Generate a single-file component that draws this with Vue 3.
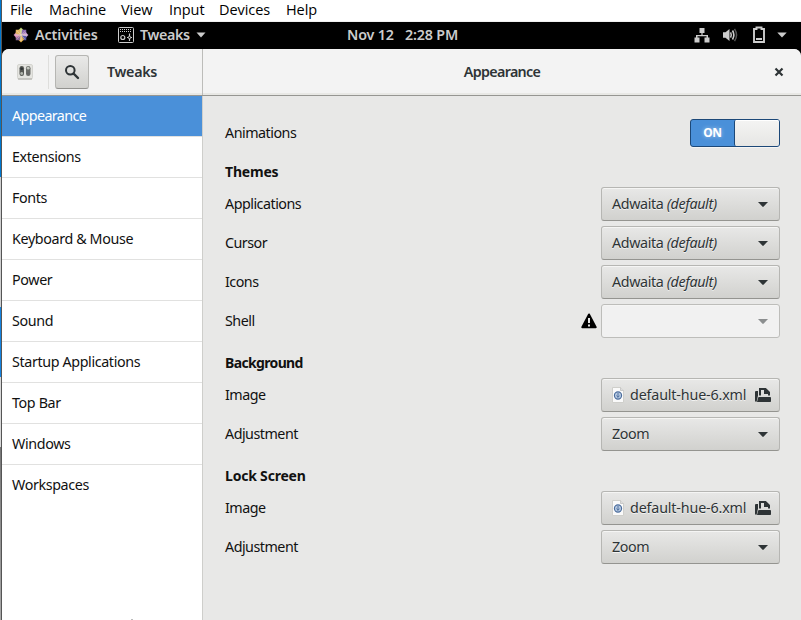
<script setup>
const menus = [
  { t: 'File', w: 39 }, { t: 'Machine', w: 72 }, { t: 'View', w: 48 },
  { t: 'Input', w: 50 }, { t: 'Devices', w: 67 }, { t: 'Help', w: 50 },
]
const pages = ['Appearance', 'Extensions', 'Fonts', 'Keyboard & Mouse', 'Power', 'Sound', 'Startup Applications', 'Top Bar', 'Windows', 'Workspaces']
const groups = [
  { title: 'Themes', rows: [
    { label: 'Applications', kind: 'combo', value: 'Adwaita', note: '(default)' },
    { label: 'Cursor', kind: 'combo', value: 'Adwaita', note: '(default)' },
    { label: 'Icons', kind: 'combo', value: 'Adwaita', note: '(default)' },
    { label: 'Shell', kind: 'combo', value: '', disabled: true },
  ] },
  { title: 'Background', tight: true, rows: [
    { label: 'Image', kind: 'file', value: 'default-hue-6.xml' },
    { label: 'Adjustment', kind: 'combo', value: 'Zoom' },
  ] },
  { title: 'Lock Screen', rows: [
    { label: 'Image', kind: 'file', value: 'default-hue-6.xml' },
    { label: 'Adjustment', kind: 'combo', value: 'Zoom' },
  ] },
]
const petals = [0, 45, 90, 135, 180, 225, 270, 315]
const petalColors = ['#b9cf6b', '#8d6bb0', '#c59ad0', '#5b5aa8', '#e8b24c', '#8f6a9a', '#d58ab8', '#e5b767']
</script>

<template>
  <div class="screen">
    <div class="edge">
      <i class="e1"></i><i class="e2"></i><i class="e3"></i><i class="e4"></i><i class="e5"></i>
    </div>
    <div class="main">
      <nav class="menubar">
        <span v-for="m in menus" :key="m.t" :style="{ width: m.w + 'px' }">{{ m.t }}</span>
      </nav>
      <div class="topbar">
        <div class="tb-left">
          <svg class="centos" width="16" height="16" viewBox="0 0 16 16">
            <path v-for="(a, i) in petals" :key="a" :transform="`rotate(${a} 8 8)`" d="M8 8L5 3.4L8 .6L11 3.4Z" :fill="petalColors[i]" />
            <path d="M8 2V14M2 8H14" stroke="#f1e6d2" stroke-width=".8" />
            <path d="M4.2 4.2L11.8 11.8M11.8 4.2L4.2 11.8" stroke="#f1e6d2" stroke-width=".4" />
          </svg>
          <b class="activities">Activities</b>
          <svg class="app-icon" width="16" height="16" viewBox="0 0 16 16" fill="none" stroke="#ccc">
            <rect x=".5" y=".5" width="15" height="15" rx="1" />
            <path d="M2 2.5H14M2 4.5H14" stroke-dasharray="1 1" />
            <circle cx="4.8" cy="10.5" r="2" stroke-width="1.2" />
            <path d="M11.5 6.5V14M9 10.5H14" stroke-width="1.2" /><circle cx="11.5" cy="10.5" r="1.2" fill="#000" />
          </svg>
          <b class="appname">Tweaks</b>
          <svg width="10" height="6" viewBox="0 0 10 6"><path d="M.5 .5H9.5L5 5.5Z" fill="#ccc" /></svg>
        </div>
        <b class="clock"><span>Nov 12</span><span>2:28 PM</span></b>
        <div class="tb-right">
          <svg width="16" height="16" viewBox="0 0 16 16" fill="#ccc">
            <path d="M5.5 1H10.5V6H8.6V8H14V10.5H15.5V15.5H10.5V10.5H12.5V9.3H3.5V10.5H5.5V15.5H.5V10.5H2V8H7.4V6H5.5Z" />
          </svg>
          <svg width="16" height="16" viewBox="0 0 16 16" fill="none" stroke="#ccc">
            <path d="M1 5.2H3.5L7.5 2V14L3.5 10.8H1Z" fill="#ccc" stroke="none" />
            <path d="M8.6 5.3Q10 8 8.6 10.7" stroke-width="1.5" />
            <path d="M10.5 3.5Q13.2 8 10.5 12.5" stroke-width="1.6" />
            <path d="M12.5 1.8Q16.6 8 12.5 14.2" stroke="#555" stroke-width="1.5" />
          </svg>
          <svg width="14" height="18" viewBox="0 0 14 18">
            <path d="M4.5 3V1.5H9.5V3H12V16H2V3Z" fill="none" stroke="#ccc" stroke-width="1.9" />
            <path d="M4 13H10" stroke="#ccc" stroke-width="2" />
          </svg>
          <svg width="10" height="6" viewBox="0 0 10 6"><path d="M.3 .5H9.7L5 5.5Z" fill="#ccc" /></svg>
        </div>
      </div>
      <div class="window">
        <header class="header">
          <div class="head-left">
            <svg class="tweaks-icon" width="16" height="16" viewBox="0 0 16 16">
              <rect x=".5" y=".5" width="15" height="14.5" rx="1.5" fill="#e4e4e0" stroke="#d4d4d0" />
              <path d="M1 15H15" stroke="#aaaaa5" />
              <rect x="2.5" y="2" width="4.5" height="10" rx="2.2" fill="#555753" />
              <rect x="9" y="2" width="4.5" height="10" rx="2.2" fill="#6a6c68" />
              <circle cx="4.7" cy="4.8" r="1.3" fill="#2e3436" /><circle cx="4.7" cy="9.5" r="1.4" fill="#b3b7af" />
              <circle cx="11.2" cy="4.2" r="1.4" fill="#c3c7bf" /><circle cx="11.2" cy="9.5" r="1.2" fill="#666" />
            </svg>
            <i class="sep"></i>
            <button class="search">
              <svg width="16" height="16" viewBox="0 0 16 16" fill="none" stroke="#2e3436">
                <circle cx="6.3" cy="6.3" r="4.3" stroke-width="2" /><path d="M9.5 9.5L14 14" stroke-width="2.4" stroke-linecap="round" />
              </svg>
            </button>
            <b class="title">Tweaks</b>
          </div>
          <div class="head-right">
            <b class="title">Appearance</b>
            <svg class="close" width="10" height="10" viewBox="0 0 10 10"><path d="M1.5 1.5L8.5 8.5M8.5 1.5L1.5 8.5" stroke="#2e3436" stroke-width="2.2" /></svg>
          </div>
        </header>
        <div class="body">
          <aside class="sidebar">
            <div v-for="(p, i) in pages" :key="p" class="page" :class="{ active: i === 0, last: i === pages.length - 1 }">{{ p }}</div>
            <i class="speck"></i>
          </aside>
          <main class="content">
            <div class="row anim">
              <span class="label">Animations</span>
              <div class="switch"><span class="on">ON</span><i class="knob"></i></div>
            </div>
            <section v-for="g in groups" :key="g.title">
              <h2 :class="{ tight: g.tight }">{{ g.title }}</h2>
              <div class="rows">
                <div v-for="r in g.rows" :key="r.label" class="row">
                  <span class="label">{{ r.label }}</span>
                  <svg v-if="r.disabled" class="warn" width="16" height="16" viewBox="0 0 16 16">
                    <path d="M8 1.5L14.7 14.2H1.3Z" stroke="#000" stroke-width="2" stroke-linejoin="round" /><path d="M8 5V10M8 11.5V13.5" stroke="#e8e8e7" stroke-width="2" />
                  </svg>
                  <div class="button" :class="{ disabled: r.disabled }">
                    <svg v-if="r.kind === 'file'" class="doc" width="12" height="16" viewBox="0 0 12 16">
                      <path d="M.5 .5H8.5L11.5 3.5V15.5H.5Z" fill="#fafafa" stroke="#cfcfcb" /><path d="M8.5 .5V3.5H11.5" fill="#ddd" stroke="#bbb" stroke-width=".7" />
                      <circle cx="6" cy="8.5" r="3.6" fill="#b5c8e0" stroke="#4a6c9c" stroke-width="1.1" />
                      <path d="M6 6V10.5M4.4 8.6L6 10.2L7.6 8.6" fill="none" stroke="#4a6c9c" stroke-width=".9" />
                    </svg>
                    <span class="value" :class="{ file: r.kind === 'file' }">{{ r.value }}<em v-if="r.note">&nbsp;{{ r.note }}</em></span>
                    <svg v-if="r.kind === 'file'" class="folder" width="16" height="16" viewBox="0 0 16 16">
                      <path d="M0 5Q0 4 1 4H3V8.5L1.6 14.8H1Q0 14.8 0 14Z" fill="#2e3436" />
                      <path d="M5 8.5V2H10.5L14 5.5V8.5" fill="none" stroke="#2e3436" stroke-width="2" /><path d="M9 2V7H14.5V5.5L11 2Z" fill="#2e3436" />
                      <path d="M4 10H15.2Q16 10 16 10.8V14.2Q16 15 15.2 15H2L3.1 10.7Q3.3 10 4 10Z" fill="#2e3436" />
                    </svg>
                    <svg v-else class="arrow" width="10" height="5" viewBox="0 0 10 5"><path d="M0 0H10L5.7 4.6Q5 5.2 4.3 4.6Z" fill="currentColor" /></svg>
                  </div>
                </div>
              </div>
            </section>
          </main>
        </div>
      </div>
    </div>
  </div>
</template>

<style>
body { margin: 0; overflow: hidden; background: #fff; }
</style>
<style scoped>
* { box-sizing: border-box; }
.screen { width: 801px; height: 620px; display: flex; font: 14.3px/20px "Noto Sans", sans-serif; letter-spacing: -.37px; color: #111; overflow: hidden; white-space: nowrap; }
.edge { width: 2px; flex: none; display: flex; flex-direction: column; border-right: 1px solid #555; }
.edge i { display: block; flex: none; }
.e1 { height: 177px; background: #0078d0; }
.e2 { height: 130px; background: #cfcfcf; }
.e3 { height: 70px; background: #1683df; }
.e4 { height: 70px; background: #d8d8d8; }
.e5 { height: 173px; background: linear-gradient(#777, #aaa); }
.main { flex: 1; min-width: 0; display: flex; flex-direction: column; background: #000; }
.menubar { height: 22px; background: #fff; border-bottom: 1px solid #f0f0f0; display: flex; padding-left: 8px; line-height: 19px; font-family: "Open Sans", "Noto Sans", sans-serif; font-size: 14.5px; letter-spacing: -.07px; color: #000; }
.topbar { height: 27px; flex: none; display: grid; grid-template-columns: 345px 1fr auto; align-items: center; color: #ccc; font-weight: 600; padding-bottom: 1px; }
.topbar b { font-weight: 600; }
.tb-left { display: flex; align-items: center; padding-left: 11px; }
.activities { margin-left: 6px; width: 83px; letter-spacing: -.1px; }
.appname { margin-left: 6px; width: 56px; }
.clock { display: flex; gap: 11px; letter-spacing: -.15px; }
.tb-right { display: flex; align-items: center; padding-right: 14px; }
.tb-right svg:nth-child(1) { margin-right: -1px; position: relative; left: -1px; }
.tb-right svg:nth-child(2) { margin-left: 12px; }
.tb-right svg:nth-child(3) { margin-left: 14px; }
.tb-right svg:nth-child(4) { margin-left: 11px; }
.window { flex: 1; min-height: 0; display: flex; flex-direction: column; background: #e8e8e7; border-radius: 7px 7px 0 0; overflow: hidden; }
.header { height: 47px; flex: none; display: flex; background: #f3f3f3; border-bottom: 1px solid #969692; box-shadow: inset 0 -2px #e8e8e5; color: #2e3436; }
.head-left { width: 201px; display: flex; align-items: center; border-right: 1px solid #bcbcb9; padding-left: 15px; }
.sep { width: 1px; height: 34px; background: #dededc; margin-left: 15px; }
.search { width: 34px; height: 34px; margin-left: 6px; padding: 0; display: grid; place-items: center; border: 1px solid #b6b6b3; border-bottom-color: #92928f; border-radius: 3px; background: linear-gradient(#e9e9e8, #d1d1ce); }
.title { font-weight: 600; }
.head-left .title { margin-left: 18px; letter-spacing: -.3px; }
.head-right { flex: 1; display: grid; grid-template-columns: 1fr auto 1fr; align-items: center; }
.head-right .title { grid-column: 2; letter-spacing: -.67px; }
.close { justify-self: end; margin-right: 17px; }
.body { flex: 1; min-height: 0; display: flex; }
.sidebar { width: 201px; flex: none; background: #fff; border-right: 1px solid #cececb; display: flex; flex-direction: column; }
.page { height: 41px; flex: none; padding-left: 10px; line-height: 40px; border-bottom: 1px solid #e1e1e0; }
.page.active { background: #4a90d9; color: #fff; letter-spacing: -.6px; }
.page.active { letter-spacing: -.6px; }
.page.last { border: 0; }
.speck { width: 2px; height: 1px; background: #bbb; margin: auto 0 0 129px; }
.content { flex: 1; padding: 23px 21px 0 22px; }
.row { display: flex; align-items: center; }
.anim { height: 28px; }
.switch { width: 90px; height: 28px; border: 1px solid #1c4878; border-radius: 3px; display: flex; background: #4a90d9; box-shadow: 0 1px #f5f5f4; }
.on { width: 43px; text-align: center; font-size: 12px; font-weight: 700; line-height: 26px; color: #fff; text-shadow: 0 0 4px #fff8; }
.knob { flex: 1; border-left: 1px solid #1c4878; border-radius: 2px; background: linear-gradient(#f4f4f3, #e6e6e4); box-shadow: inset 0 1px #fff; }
h2 { margin: 0; font-size: 14px; font-weight: 700; letter-spacing: -.2px; line-height: 20px; height: 20px; }
h2.tight { letter-spacing: -.65px; }
section { padding-top: 15px; }
.rows { display: flex; flex-direction: column; gap: 5px; padding-top: 5px; }
.label { flex: 1; letter-spacing: -.5px; }
.warn { margin-right: 4px; }
.button { width: 179px; height: 34px; display: flex; align-items: center; padding: 0 11px 0 10px; border: 1px solid #b6b6b3; border-bottom-color: #949490; border-radius: 3px; background: linear-gradient(#e8e8e7, #d1d1ce); box-shadow: inset 0 1px #f5f5f4; color: #2e3436; text-shadow: 0 1px #ffffffb0; }
.button.disabled { background: #f1f1f1; border-color: #bdbdba; color: #8b8e8f; }
.value { flex: 1; }
.value.file { margin-left: 6px; flex: none; letter-spacing: -.16px; }
.folder { margin-left: auto; margin-right: -3px; }
</style>
